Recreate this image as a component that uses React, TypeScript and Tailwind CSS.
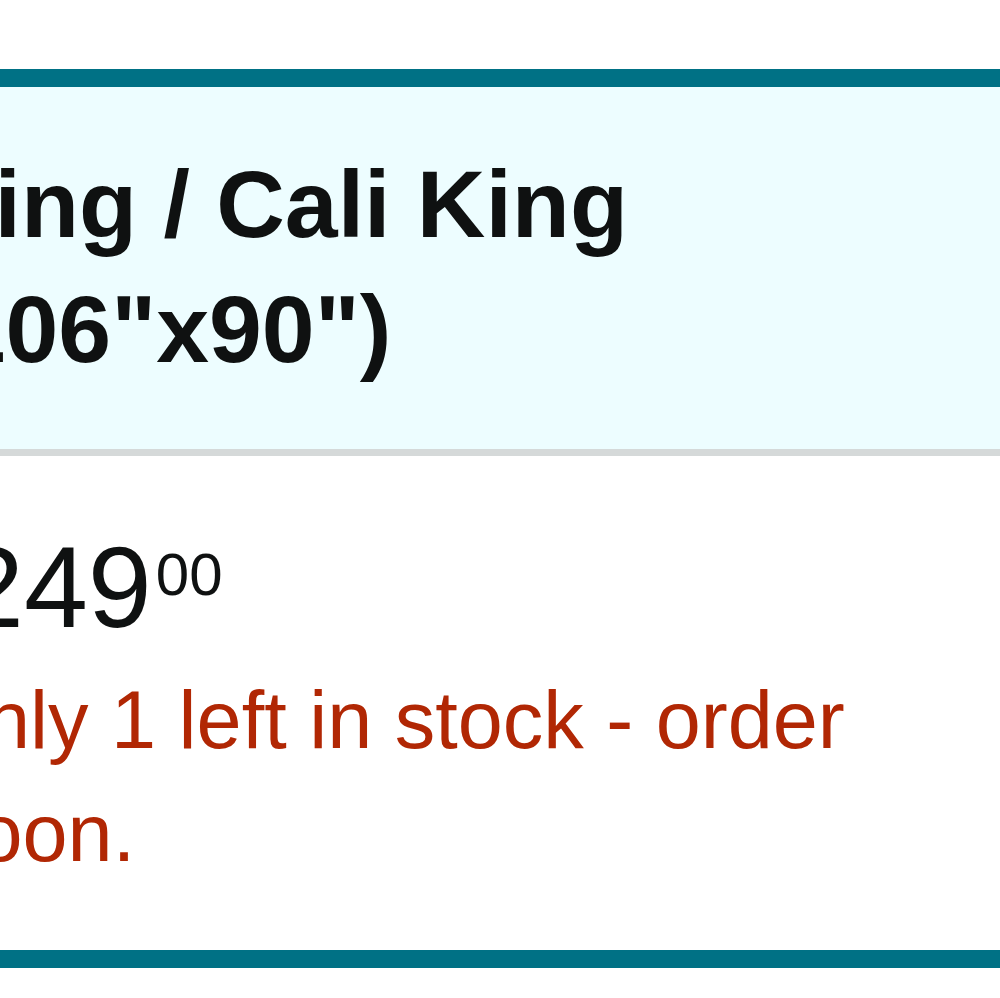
const App = () => {
    return (
        <div className="min-h-[998px] w-[1000px] overflow-hidden bg-white font-['Liberation_Sans',Arial,sans-serif] text-[#0f1111]">
            <div className="h-[69px]" />

            {/* Selected size option card */}
            <div className="border-y-[18px] border-[#007185]">
                {/* Header */}
                <div className="border-b-[7px] border-[#d5d9d9] bg-[#edfdff] pt-[55px] pb-[57px]">
                    <div className="whitespace-nowrap text-[95px] font-bold leading-[125px]">
                        <div className="ml-[-74px]">King / Cali King</div>
                        <div className="ml-[-79px]">(106"x90")</div>
                    </div>
                </div>

                {/* Body */}
                <div className="pt-[74px] pb-[60px]">
                    <div className="ml-[-104px] flex items-start">
                        <span className="text-[115px] leading-[115px]">$249</span>
                        <span className="mt-[15px] ml-[4px] text-[60px] leading-[60px]">00</span>
                    </div>
                    <div className="mt-[19px] whitespace-nowrap text-[81px] leading-[113px] text-[#b12704]">
                        <div className="ml-[-78px]">Only 1 left in stock - order</div>
                        <div className="ml-[-63px]">soon.</div>
                    </div>
                </div>
            </div>
        </div>
    );
};

export default App;
